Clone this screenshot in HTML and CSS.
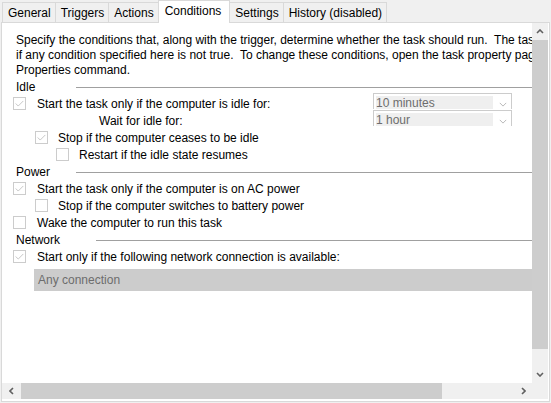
FILE: index.html
```html
<!DOCTYPE html>
<html>
  <head>
    <title>Task Properties - Conditions</title>
    <link rel="stylesheet" href="styles.css">
  </head>
  <body>
    <div class="tabs">
      <div class="tab">General</div>
      <div class="tab">Triggers</div>
      <div class="tab">Actions</div>
      <div class="tab active">Conditions</div>
      <div class="tab">Settings</div>
      <div class="tab">History (disabled)</div>
    </div>

    <div class="panel">
      <div class="viewport">
        <div class="content">
          <div class="desc">
            <div>Specify the conditions that, along with the trigger, determine whether the task should run.&nbsp; The task will not run</div>
            <div>if any condition specified here is not true.&nbsp; To change these conditions, open the task property pages using the</div>
            <div>Properties command.</div>
          </div>

          <div class="group-head"><span class="group-name">Idle</span><span class="rule"></span></div>
          <div class="row row-select">
            <div class="check lvl1"><span class="box on"><svg viewBox="0 0 13 13"><polyline points="2,6.5 5,9.5 11,3.5" /></svg></span><span>Start the task only if the computer is idle for:</span></div>
            <div class="select"><span class="field">10 minutes</span><svg class="caret" viewBox="0 0 10 6"><polyline points="1,1 5,5 9,1" /></svg></div>
          </div>
          <div class="row row-select">
            <div class="plain">Wait for idle for:</div>
            <div class="select"><span class="field">1 hour</span><svg class="caret" viewBox="0 0 10 6"><polyline points="1,1 5,5 9,1" /></svg></div>
          </div>
          <div class="row">
            <div class="check lvl2"><span class="box on"><svg viewBox="0 0 13 13"><polyline points="2,6.5 5,9.5 11,3.5" /></svg></span><span>Stop if the computer ceases to be idle</span></div>
          </div>
          <div class="row">
            <div class="check lvl3"><span class="box"></span><span>Restart if the idle state resumes</span></div>
          </div>

          <div class="group-head"><span class="group-name">Power</span><span class="rule"></span></div>
          <div class="row">
            <div class="check lvl1"><span class="box on"><svg viewBox="0 0 13 13"><polyline points="2,6.5 5,9.5 11,3.5" /></svg></span><span>Start the task only if the computer is on AC power</span></div>
          </div>
          <div class="row">
            <div class="check lvl2"><span class="box"></span><span>Stop if the computer switches to battery power</span></div>
          </div>
          <div class="row">
            <div class="check lvl1"><span class="box"></span><span>Wake the computer to run this task</span></div>
          </div>

          <div class="group-head"><span class="group-name wide">Network</span><span class="rule"></span></div>
          <div class="row">
            <div class="check lvl1"><span class="box on"><svg viewBox="0 0 13 13"><polyline points="2,6.5 5,9.5 11,3.5" /></svg></span><span>Start only if the following network connection is available:</span></div>
          </div>
          <div class="connection">Any connection</div>
        </div>
      </div>

      <div class="vbar">
        <div class="arrow"><svg viewBox="0 0 8 5"><polyline points="1,4 4,1 7,4" /></svg></div>
        <div class="track"><div class="thumb"></div></div>
        <div class="arrow"><svg viewBox="0 0 8 5"><polyline points="1,1 4,4 7,1" /></svg></div>
      </div>

      <div class="hbar">
        <div class="arrow"><svg viewBox="0 0 5 8"><polyline points="4,1 1,4 4,7" /></svg></div>
        <div class="track"><div class="thumb"></div></div>
        <div class="arrow"><svg viewBox="0 0 5 8"><polyline points="1,1 4,4 1,7" /></svg></div>
      </div>

      <div class="corner"></div>
    </div>
  </body>
</html>
```

FILE: styles.css
```css
body {
  margin: 0;
  padding: 0 1px;
  background-color: #f0f0f0;
  font-family: "Liberation Sans", Arial, sans-serif;
  font-size: 12px;
  color: #000;
}

/* tab strip */

.tabs {
  display: flex;
  align-items: flex-end;
  height: 22px;
  padding-left: 2px;
  position: relative;
  z-index: 1;
}

.tab {
  height: 19px;
  line-height: 20px;
  padding: 0 4px 0 5px;
  border: 1px solid #d9d9d9;
  border-bottom: none;
  margin-left: -1px;
  background-color: #f0f0f0;
  white-space: nowrap;
}

.tab.active {
  height: 22px;
  line-height: 20px;
  margin-bottom: -1px;
  padding: 0 8px 0 6px;
  background-color: #fff;
}

/* page body with its two scroll bars */

.panel {
  display: grid;
  grid-template-columns: 1fr 16px;
  grid-template-rows: 360px 16px;
  height: 377px;
  padding: 0 1px 1px 0;
  border: 1px solid #d9d9d9;
  background-color: #fff;
}

.viewport {
  overflow: hidden;
}

.content {
  width: 640px;
  padding: 10px 0 0 11px;
  white-space: nowrap;
}

.desc {
  padding-left: 3px;
  line-height: 15px;
}

.group-head {
  display: flex;
  align-items: center;
  height: 17px;
  padding-left: 3px;
}

.group-name {
  width: 60px;
}

.group-name.wide {
  width: 80px;
}

.rule {
  flex: 1;
  height: 1px;
  margin-top: 1px;
  background-color: #a0a0a0;
}

.row {
  height: 17px;
  display: flex;
  align-items: center;
}

.row-select {
  display: grid;
  grid-template-columns: 360px 139px;
}

.check {
  display: flex;
  align-items: center;
  gap: 11px;
}

.lvl2 {
  padding-left: 22px;
  gap: 10px;
}

.lvl3 {
  padding-left: 43px;
  gap: 10px;
}

.plain {
  padding-left: 86px;
}

.box {
  width: 11px;
  height: 11px;
  border: 1px solid #cccccc;
  background-color: #fff;
  flex-shrink: 0;
}

.box svg {
  display: block;
  width: 11px;
  height: 11px;
  fill: none;
  stroke: #bcbcbc;
  stroke-width: 1;
}

/* disabled drop-down; the bottom edge falls under the next row */

.select {
  display: flex;
  align-items: flex-start;
  height: 16px;
  margin-top: -5px;
  padding: 2px 0 0 2px;
  border: 1px solid #cccccc;
  border-bottom: none;
  overflow: hidden;
  box-sizing: border-box;
}

.select .field {
  width: 117px;
  height: 14px;
  line-height: 15px;
  background-color: #efefef;
  color: #6d6d6d;
  overflow: hidden;
}

.select .caret {
  width: 8px;
  height: 5px;
  margin: 6px 0 0 6px;
  fill: none;
  stroke: #a8a8a8;
  stroke-width: 1;
}

.connection {
  width: 520px;
  height: 22px;
  line-height: 23px;
  margin: 4px 0 0 21px;
  padding-left: 4px;
  background-color: #cccccc;
  color: #6d6d6d;
}

/* scroll bars */

.vbar {
  display: flex;
  flex-direction: column;
  background-color: #f0f0f0;
}

.hbar {
  display: flex;
  background-color: #f0f0f0;
}

.arrow {
  display: flex;
  align-items: center;
  justify-content: center;
  flex-shrink: 0;
}

.vbar .arrow {
  height: 17px;
}

.hbar .arrow {
  width: 18px;
}

.arrow svg {
  fill: none;
  stroke: #606060;
  stroke-width: 1.6;
}

.vbar .arrow svg {
  width: 8px;
  height: 5px;
}

.hbar .arrow svg {
  width: 5px;
  height: 8px;
}

.track {
  flex: 1;
  display: flex;
}

.vbar .track {
  flex-direction: column;
}

.vbar .thumb {
  height: 309px;
  background-color: #cdcdcd;
}

.hbar .thumb {
  width: 421px;
  margin-left: 1px;
  background-color: #cdcdcd;
}

.corner {
  background-color: #f0f0f0;
}
```
